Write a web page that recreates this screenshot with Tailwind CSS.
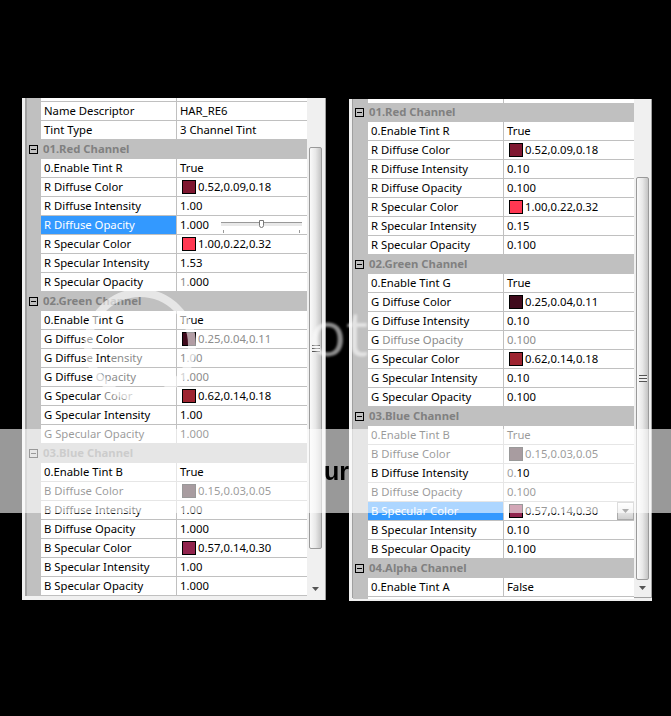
<!DOCTYPE html>
<html lang="en">
<head>
    <meta charset="UTF-8">
    <title>Tint properties</title>
    <script src="https://cdn.jsdelivr.net/npm/@tailwindcss/browser@4"></script>
</head>
<body class="bg-black">
<div class="relative w-[671px] h-[716px] overflow-hidden font-['Noto_Sans',sans-serif] text-[11.3px] leading-[18px] text-black">
    <div class="flex items-start pt-[98px] pl-[22px]">

        <!-- Left grid -->
        <div class="flex w-[304px] h-[502px] bg-[#f0f0f0] pl-[3px]">
            <div class="w-[282px] h-[498px] border-l-2 border-[#a0a0a0]">
                <div class="flex h-[3px]"><div class="w-[14px] bg-[#c0c0c0]"></div><div class="w-[136px] bg-white border-r border-[#c0c0c0]"></div><div class="w-[130px] bg-white"></div></div>
                <div class="h-px bg-[#c0c0c0]"></div>
                <div id="leftRows"></div>
            </div>
            <div class="flex flex-col w-[19px] pt-[49px] pr-[3px] pl-[2px] h-[502px] border-r border-[#a0a0a0]">
                <div class="flex items-center justify-center h-[402px] border border-[#9a9a9a] rounded-[2px] bg-gradient-to-r from-[#fafafa] via-[#e8e8e8] to-[#c4c4c4]">
                    <div class="w-[8px] h-[7px] border-y border-[#555] bg-[linear-gradient(#f0f0f0_40%,#555_40%,#555_60%,#f0f0f0_60%)]"></div>
                </div>
                <svg class="mt-auto mb-[8px] ml-[3px]" width="8" height="5"><polygon points="0,0 7,0 3.5,4" fill="#555"/></svg>
            </div>
        </div>

        <!-- Right grid -->
        <div class="flex w-[303px] h-[502px] ml-[23px] mt-px bg-[#f0f0f0] pl-[3px]">
            <div class="w-[282px] h-[499px] border-l border-b border-[#a0a0a0]">
                <div class="flex h-[4px]"><div class="w-[15px] bg-[#c0c0c0]"></div><div class="w-[136px] bg-white border-r border-[#c0c0c0]"></div><div class="w-[130px] bg-white"></div></div>
                <div id="rightRows"></div>
                <div class="flex h-[2px]"><div class="w-[15px] bg-[#c0c0c0]"></div><div class="w-[266px] bg-white"></div></div>
            </div>
            <div class="flex flex-col w-[18px] pt-[78px] px-[2px] h-[499px] border-r border-b border-[#a0a0a0]">
                <div class="flex items-center justify-center h-[403px] border border-[#9a9a9a] rounded-[2px] bg-gradient-to-r from-[#fafafa] via-[#e8e8e8] to-[#c4c4c4]">
                    <div class="w-[8px] h-[7px] border-y border-[#555] bg-[linear-gradient(#f0f0f0_40%,#555_40%,#555_60%,#f0f0f0_60%)]"></div>
                </div>
                <svg class="mt-auto mb-[6px] ml-[3px]" width="8" height="5"><polygon points="0,0 7,0 3.5,4" fill="#555"/></svg>
            </div>
        </div>
    </div>

    <!-- Watermark that lies over both grids -->
    <svg class="absolute left-[70px] top-[275px] z-20 pointer-events-none" width="140" height="140" fill="none">
        <circle cx="70" cy="70" r="52" stroke="white" stroke-opacity="0.6" stroke-width="8"/>
    </svg>
    <div class="absolute left-[309px] top-[292px] z-20 whitespace-nowrap font-['Open_Sans',sans-serif] font-normal text-[62px] leading-[80px] text-white/55 blur-[1px]">ot</div>
    <div class="absolute left-0 top-[429px] z-20 w-[671px] h-[84px] bg-white/60"></div>
    <div class="absolute left-[324px] top-[449px] z-20 font-['Liberation_Sans',sans-serif] font-bold text-[25px] leading-[45px] text-black blur-[0.5px]">ur</div>
</div>

<script>
    const grid = 'border-b border-[#c0c0c0]';
    const faded = 'text-[#8c8c8c]';

    function swatch(color) {
        return `<span class="inline-block align-top mt-[2px] ml-[2px] mr-[2px] w-[14px] h-[14px] border border-black" style="background-color:${color}"></span>`;
    }

    function header(title) {
        return `<div class="flex items-center h-[19px] bg-[#c0c0c0]">
            <span class="flex items-center justify-center ml-[2px] w-[9px] h-[9px] border border-black"><span class="w-[5px] h-px bg-black"></span></span>
            <span class="ml-[5px] pb-[2px] font-bold text-[#808080]">${title}</span>
        </div>`;
    }

    function row(gutter, label, value, opts) {
        opts = opts || {};
        const labelColor = opts.selected ? 'bg-[#3399ff] text-white' : 'bg-white';
        const labelText = opts.keep ? `<span class="relative z-30">${label}</span>` : label;
        return `<div class="flex h-[19px]">
            <div class="${gutter} bg-[#c0c0c0]"></div>
            <div class="w-[136px] pl-[3px] whitespace-nowrap border-r ${grid} ${labelColor}">${labelText}</div>
            <div class="relative w-[130px] pl-[3px] whitespace-nowrap ${grid} bg-white">${value}</div>
        </div>`;
    }

    function dim(text) {
        return `<span class="${faded}">${text}</span>`;
    }

    const slider = `1.000<span class="absolute left-[44px] top-[6px] w-[81px] h-[4px] border-t border-[#999] bg-[#e8e8e8]"></span>
        <span class="absolute left-[82px] top-[4px] w-[5px] h-[8px] border border-[#777] rounded-b-[3px] bg-white"></span>
        <span class="absolute left-[46px] top-[14px] w-px h-[3px] bg-[#999]"></span>
        <span class="absolute left-[122px] top-[14px] w-px h-[3px] bg-[#999]"></span>`;

    const dropdown = `<span class="absolute right-0 top-0 flex items-center justify-center w-[17px] h-[18px] border border-[#aaa] bg-gradient-to-b from-white to-[#d0d0d0]">
        <svg width="8" height="5"><polygon points="0,0 7,0 3.5,4" fill="#333"/></svg></span>`;

    const left = [
        ['Name Descriptor', 'HAR_RE6'],
        ['Tint Type', '3 Channel Tint'],
        '01.Red Channel',
        ['0.Enable Tint R', 'True'],
        ['R Diffuse Color', swatch('#7f1730') + '0.52,0.09,0.18'],
        ['R Diffuse Intensity', '1.00'],
        ['R Diffuse Opacity', slider, { selected: true }],
        ['R Specular Color', swatch('#ff3852') + '1.00,0.22,0.32'],
        ['R Specular Intensity', '1.53'],
        ['R Specular Opacity', dim('1.') + '000'],
        '02.Green Channel',
        ['0.Enable Tint G', 'True'],
        ['G Diffuse Color', swatch('#400a1c') + dim('0.25,0.04,0.11')],
        ['G Diffuse ' + 'Int' + dim('ensity'), dim('1.00')],
        ['G Diffuse ' + dim('Opacity'), dim('1.000')],
        ['G Specular ' + dim('Color'), swatch('#9e2430') + '0.62,0.14,0.18'],
        ['G Specular Intensity', '1.00'],
        ['G Specular Opacity', '1.000'],
        '03.Blue Channel',
        ['0.Enable Tint B', '<span class="relative z-30">True</span>', { keep: true }],
        ['B Diffuse Color', swatch('#260813') + '0.15,0.03,0.05'],
        ['B Diffuse Intensity', '1.00'],
        ['B Diffuse Opacity', '1.000'],
        ['B Specular Color', swatch('#91244d') + '0.57,0.14,0.30'],
        ['B Specular Intensity', '1.00'],
        ['B Specular Opacity', '1.000'],
    ];

    const right = [
        '01.Red Channel',
        ['0.Enable Tint R', 'True'],
        ['R Diffuse Color', swatch('#7f1730') + '0.52,0.09,0.18'],
        ['R Diffuse Intensity', '0.10'],
        ['R Diffuse Opacity', '0.100'],
        ['R Specular Color', swatch('#ff3852') + '1.00,0.22,0.32'],
        ['R Specular Intensity', '0.15'],
        ['R Specular Opacity', '0.100'],
        '02.Green Channel',
        ['0.Enable Tint G', 'True'],
        ['G Diffuse Color', swatch('#400a1c') + '0.25,0.04,0.11'],
        ['G Diffuse Intensity', '0.10'],
        ['G ' + dim('Diffuse Opacity'), dim('0.100')],
        ['G Specular Color', swatch('#9e2430') + '0.62,0.14,0.18'],
        ['G Specular Intensity', '0.10'],
        ['G Specular Opacity', '0.100'],
        '03.Blue Channel',
        ['0.Enable Tint B', 'True'],
        ['B Diffuse Color', swatch('#260813') + '0.15,0.03,0.05'],
        ['B Diffuse Intensity', '0.<span class="relative z-30">10</span>', { keep: true }],
        ['B Diffuse Opacity', '0.100'],
        ['B Specular Color', swatch('#91244d') + '0.57,0.14,0.30' + dropdown, { selected: true }],
        ['B Specular Intensity', '0.10'],
        ['B Specular Opacity', '0.100'],
        '04.Alpha Channel',
        ['0.Enable Tint A', 'False'],
    ];

    function render(id, rows, gutter) {
        document.getElementById(id).innerHTML = rows
            .map(r => typeof r === 'string' ? header(r) : row(gutter, r[0], r[1], r[2]))
            .join('');
    }

    render('leftRows', left, 'w-[14px]');
    render('rightRows', right, 'w-[15px]');
</script>
</body>
</html>
